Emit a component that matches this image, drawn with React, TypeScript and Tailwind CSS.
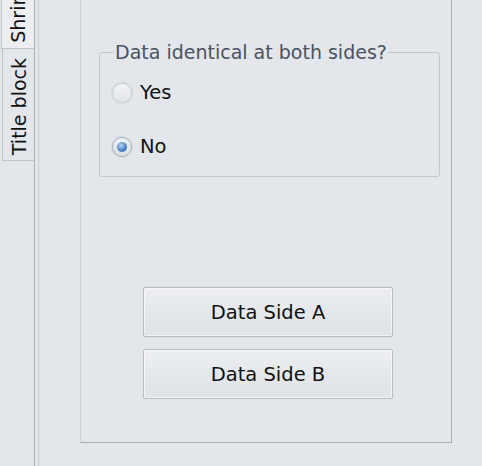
import React from 'react';

const Radio: React.FC<{ label: string; checked?: boolean }> = ({ label, checked }) => (
  <div className="flex items-center h-[22px] gap-[8px]">
    <span
      className={`w-[20px] h-[20px] rounded-full flex items-center justify-center shrink-0 border shadow-[0_0_0_1px_rgba(200,205,212,0.5)] ${
        checked
          ? 'border-[#aab1b9] bg-[linear-gradient(#f2f4f6,#d9dde2)]'
          : 'border-[#cdd1d6] bg-[linear-gradient(#f4f5f7,#e0e3e7)]'
      }`}
    >
      {checked && (
        <span className="w-[10px] h-[10px] rounded-full bg-[radial-gradient(circle_at_40%_35%,#b9d6f2,#4c86c2_55%,#2a5d95)]" />
      )}
    </span>
    <span className="text-[19.5px] leading-[22px] text-[#111]">{label}</span>
  </div>
);

const Button: React.FC<{ label: string }> = ({ label }) => (
  <button className="w-[250px] h-[50px] rounded-[2px] border border-[#b7bbc1] bg-[linear-gradient(#eceef1,#dfe2e6)] shadow-[inset_0_0_0_1px_rgba(255,255,255,0.6)] text-[19.5px] text-[#111] flex items-center justify-center pt-[1px]">
    {label}
  </button>
);

export default function App() {
  return (
    <div className="w-[482px] h-[466px] bg-[#e3e6ea] flex overflow-hidden font-['DejaVu_Sans',sans-serif]">
      {/* tab strip */}
      <div className="w-[34px] shrink-0 flex flex-col">
        <div className="h-[49px] ml-[1px] bg-[#eceef1] border-l border-b border-[#c0c4c9] overflow-hidden flex flex-col justify-end items-center pb-[5px]">
          <span className="shrink-0 [writing-mode:vertical-rl] rotate-180 whitespace-nowrap text-[19px] leading-[22px] text-[#111]">
            Shrink sleeve
          </span>
        </div>
        <div className="h-[112px] ml-[2px] border-l border-b border-[#c0c4c9] overflow-hidden flex flex-col justify-end items-center pb-[5px]">
          <span className="shrink-0 [writing-mode:vertical-rl] rotate-180 whitespace-nowrap text-[19px] leading-[22px] text-[#111]">
            Title block
          </span>
        </div>
      </div>
      {/* pane frame */}
      <div className="w-[5px] shrink-0 border-l border-r border-l-[#aeb2b8] border-r-[#c7cbd0]" />
      {/* content */}
      <div className="flex-1 pl-[41px] pr-[30px]">
        <div className="h-[443px] border-l border-r border-b border-l-[#cdd1d5] border-r-[#a9adb3] border-b-[#a9adb3] flex flex-col pt-[41px]">
          <fieldset className="ml-[18px] mr-[11px] h-[136px] border border-[#c4c8cd] rounded-[3px] pl-[12px]">
            <legend className="ml-[2px] px-[1px] text-[19px] leading-[22px] text-[#4a5261]">
              Data identical at both sides?
            </legend>
            <div className="flex flex-col gap-[32px] mt-[19px]">
              <Radio label="Yes" />
              <Radio label="No" checked />
            </div>
          </fieldset>
          <div className="flex flex-col gap-[12px] mt-[110px] ml-[62px]">
            <Button label="Data Side A" />
            <Button label="Data Side B" />
          </div>
        </div>
      </div>
    </div>
  );
}
